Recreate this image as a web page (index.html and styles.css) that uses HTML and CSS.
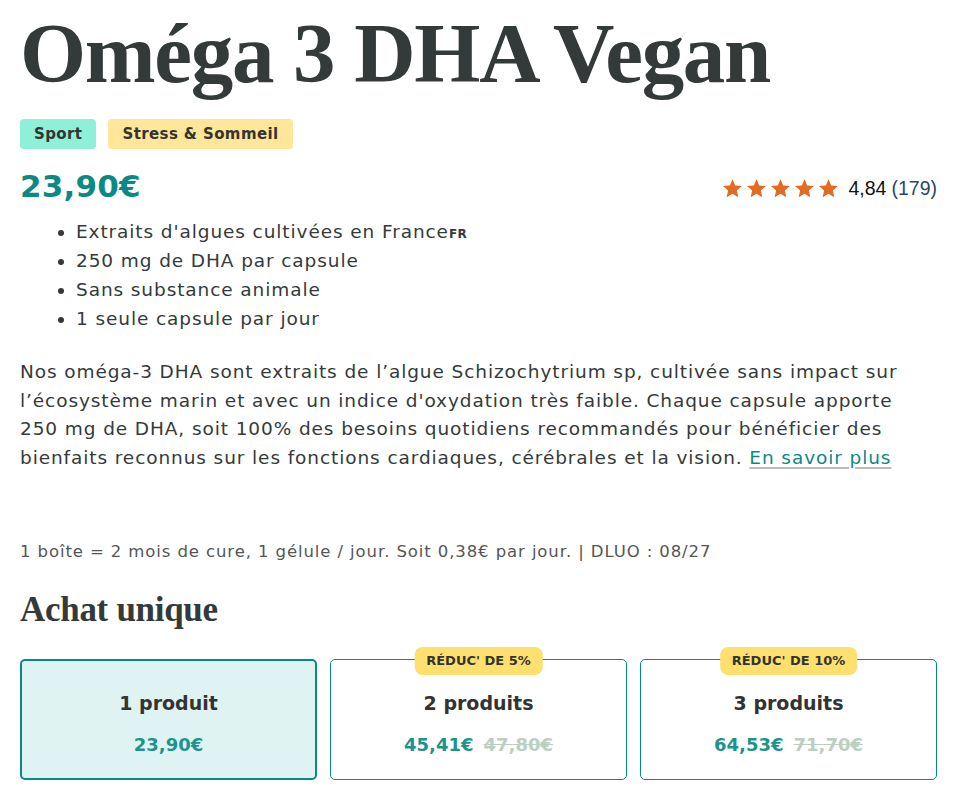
FILE: index.html
```html
<!DOCTYPE html>
<html lang="fr">
<head>
<meta charset="utf-8">
<title>Oméga 3 DHA Vegan</title>
<link rel="stylesheet" href="styles.css">
</head>
<body>
<main class="product">
  <h1 class="title">Oméga 3 DHA Vegan</h1>
  <div class="tags">
    <span class="tag tag-sport">Sport</span>
    <span class="tag tag-stress">Stress &amp; Sommeil</span>
  </div>
  <div class="price-row">
    <div class="price">23,90€</div>
    <div class="rating">
      <span class="stars">
        <svg viewBox="0 0 24 24" class="star"><path d="M12 1.5l3.09 7.1 7.71.68-5.84 5.08 1.74 7.54L12 17.9l-6.7 4.0 1.74-7.54L1.2 9.28l7.71-.68z"/></svg>
        <svg viewBox="0 0 24 24" class="star"><path d="M12 1.5l3.09 7.1 7.71.68-5.84 5.08 1.74 7.54L12 17.9l-6.7 4.0 1.74-7.54L1.2 9.28l7.71-.68z"/></svg>
        <svg viewBox="0 0 24 24" class="star"><path d="M12 1.5l3.09 7.1 7.71.68-5.84 5.08 1.74 7.54L12 17.9l-6.7 4.0 1.74-7.54L1.2 9.28l7.71-.68z"/></svg>
        <svg viewBox="0 0 24 24" class="star"><path d="M12 1.5l3.09 7.1 7.71.68-5.84 5.08 1.74 7.54L12 17.9l-6.7 4.0 1.74-7.54L1.2 9.28l7.71-.68z"/></svg>
        <svg viewBox="0 0 24 24" class="star"><path d="M12 1.5l3.09 7.1 7.71.68-5.84 5.08 1.74 7.54L12 17.9l-6.7 4.0 1.74-7.54L1.2 9.28l7.71-.68z"/></svg>
      </span>
      <span class="score">4,84</span>
      <span class="count">(179)</span>
    </div>
  </div>
  <ul class="features">
    <li>Extraits d'algues cultivées en France<span class="fr">FR</span></li>
    <li>250 mg de DHA par capsule</li>
    <li>Sans substance animale</li>
    <li>1 seule capsule par jour</li>
  </ul>
  <p class="desc">Nos oméga-3 DHA sont extraits de l’algue Schizochytrium sp, cultivée sans impact sur l’écosystème marin et avec un indice d'oxydation très faible. Chaque capsule apporte 250 mg de DHA, soit 100% des besoins quotidiens recommandés pour bénéficier des bienfaits reconnus sur les fonctions cardiaques, cérébrales et la vision. <a href="#" class="more">En savoir plus</a></p>
  <p class="dose">1 boîte = 2 mois de cure, 1 gélule / jour. Soit 0,38€ par jour. | DLUO : 08/27</p>
  <h2 class="subtitle">Achat unique</h2>
  <div class="options">
    <div class="option selected">
      <div class="opt-name">1 produit</div>
      <div class="opt-price"><span class="now">23,90€</span></div>
    </div>
    <div class="option">
      <span class="badge">RÉDUC' DE 5%</span>
      <div class="opt-name">2 produits</div>
      <div class="opt-price"><span class="now">45,41€</span><span class="old">47,80€</span></div>
    </div>
    <div class="option">
      <span class="badge">RÉDUC' DE 10%</span>
      <div class="opt-name">3 produits</div>
      <div class="opt-price"><span class="now">64,53€</span><span class="old">71,70€</span></div>
    </div>
  </div>
</main>
</body>
</html>
```
FILE: styles.css
```css
* { box-sizing: border-box; }
body {
  margin: 0;
  background: #fff;
  color: #343a3a;
  font-family: "DejaVu Sans", "Open Sans", sans-serif;
}
.product {
  padding: 0 36px 0 20px;
}
.title {
  margin: 0;
  padding-top: 3px;
  font-family: "Liberation Serif", "DejaVu Serif", serif;
  font-weight: 700;
  font-size: 85px;
  line-height: 100px;
  letter-spacing: -1.3px;
  color: #343a3a;
}
.tags {
  display: flex;
  gap: 12px;
  margin-top: 16px;
}
.tag {
  display: inline-block;
  height: 30px;
  line-height: 30px;
  padding: 0 14px;
  border-radius: 4px;
  font-size: 15px;
  font-weight: 700;
  letter-spacing: 0.4px;
  color: #333;
}
.tag-sport { background: #8ef1d7; }
.tag-stress { background: #ffe699; }
.price-row {
  display: flex;
  justify-content: space-between;
  align-items: center;
  margin-top: 17px;
}
.price {
  font-size: 31px;
  font-weight: 700;
  color: #0b8a85;
  line-height: 40px;
  letter-spacing: 0.2px;
}
.rating {
  display: flex;
  align-items: center;
  font-family: "Liberation Sans", Arial, sans-serif;
  font-size: 19.5px;
  padding-top: 4px;
}
.stars { display: flex; gap: 3px; margin-right: 10px; }
.star { width: 21px; height: 21px; fill: #e06b22; }
.score { color: #111; margin-right: 5px; }
.count { color: #2a4766; }
.features {
  margin: 11px 0 0;
  padding-left: 56px;
  font-size: 18.5px;
  letter-spacing: 0.9px;
  line-height: 29px;
  color: #343a3a;
}
.fr {
  font-size: 12px;
  line-height: 1;
  font-weight: 600;
  letter-spacing: 0.5px;
}
.desc {
  margin: 25px 0 0;
  font-size: 18.5px;
  letter-spacing: 0.9px;
  line-height: 28.7px;
  color: #343a3a;
}
.more {
  color: #0b8a85;
  text-decoration: underline;
  text-decoration-color: #bbb;
  text-decoration-thickness: 2px;
  text-underline-offset: 3px;
}
.dose {
  margin: 69px 0 0;
  font-size: 16.5px;
  letter-spacing: 0.9px;
  color: #555;
}
.subtitle {
  margin: 29px 0 0;
  font-family: "Liberation Serif", "DejaVu Serif", serif;
  font-weight: 700;
  font-size: 35px;
  line-height: 40px;
  letter-spacing: -0.3px;
  color: #343a3a;
}
.options {
  display: grid;
  grid-template-columns: repeat(3, 1fr);
  gap: 13px;
  margin-top: 29px;
}
.option {
  position: relative;
  height: 121px;
  border: 1px solid #0b8a85;
  border-radius: 5px;
  display: flex;
  flex-direction: column;
  align-items: center;
  padding-top: 30px;
}
.option.selected {
  border: 2px solid #0b8a85;
  background: #dff3f3;
  padding-top: 29px;
}
.badge {
  position: absolute;
  top: -13px;
  left: 50%;
  transform: translateX(-50%);
  background: #ffe06e;
  border-radius: 8px;
  padding: 0 12px;
  height: 28px;
  line-height: 28px;
  font-size: 13px;
  font-weight: 600;
  color: #333;
  white-space: nowrap;
}
.opt-name {
  font-size: 19px;
  font-weight: 600;
  color: #333;
  line-height: 26px;
}
.opt-price {
  margin-top: 16px;
  display: flex;
  gap: 10px;
  font-size: 18px;
  font-weight: 700;
  line-height: 26px;
}
.now { color: #1c948e; }
.old { color: #b9cfc1; text-decoration: line-through; }
```
